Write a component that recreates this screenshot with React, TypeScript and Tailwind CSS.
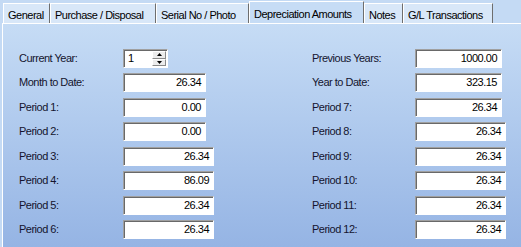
import { ReactNode } from 'react'

const tabs = [
  { label: 'General', w: 'w-[47px]' },
  { label: 'Purchase / Disposal', w: 'w-[106px]' },
  { label: 'Serial No / Photo', w: 'w-[93px]' },
  { label: 'Depreciation Amounts', w: 'w-[115px]', active: true },
  { label: 'Notes', w: 'w-[39px]' },
  { label: 'G/L Transactions', w: 'w-[90px]' },
]

const rows = [
  { left: 'Current Year:', lv: null, lw: '', right: 'Previous Years:', rv: '1000.00', rw: 'w-[87px]', mt: 'mt-[25px]' },
  { left: 'Month to Date:', lv: '26.34', lw: 'w-[83px]', right: 'Year to Date:', rv: '323.15', rw: 'w-[87px]', mt: 'mt-[5px]' },
  { left: 'Period 1:', lv: '0.00', lw: 'w-[83px]', right: 'Period 7:', rv: '26.34', rw: 'w-[87px]', mt: 'mt-[6px]' },
  { left: 'Period 2:', lv: '0.00', lw: 'w-[83px]', right: 'Period 8:', rv: '26.34', rw: 'w-[91px]', mt: 'mt-[5px]' },
  { left: 'Period 3:', lv: '26.34', lw: 'w-[91px]', right: 'Period 9:', rv: '26.34', rw: 'w-[91px]', mt: 'mt-[6px]' },
  { left: 'Period 4:', lv: '86.09', lw: 'w-[91px]', right: 'Period 10:', rv: '26.34', rw: 'w-[91px]', mt: 'mt-[5px]' },
  { left: 'Period 5:', lv: '26.34', lw: 'w-[91px]', right: 'Period 11:', rv: '26.34', rw: 'w-[91px]', mt: 'mt-[6px]' },
  { left: 'Period 6:', lv: '26.34', lw: 'w-[91px]', right: 'Period 12:', rv: '26.34', rw: 'w-[91px]', mt: 'mt-[5px]' },
]

function Box({ children, className }: { children?: ReactNode; className?: string }) {
  return (
    <div
      className={`flex h-[19px] items-center border-t border-l border-[#a0a0a0] border-r border-b border-r-white border-b-white bg-white shadow-[inset_1px_1px_0_#696969] ${className ?? ''}`}
    >
      {children}
    </div>
  )
}

function Spinner() {
  return (
    <Box className="w-[45px]">
      <span className="flex-1 pl-[4px] text-black">1</span>
      <div className="mr-[1px] flex h-[15px] w-[14px] flex-col">
        <div className="flex flex-1 items-center justify-center border border-t-white border-l-white border-r-[#8a8a8a] border-b-[#8a8a8a] bg-[#ececec]">
          <svg width="5" height="3" viewBox="0 0 5 3">
            <path d="M2.5 0 L5 3 L0 3 Z" fill="#000" />
          </svg>
        </div>
        <div className="flex flex-1 items-center justify-center border border-t-white border-l-white border-r-[#8a8a8a] border-b-[#8a8a8a] bg-[#ececec]">
          <svg width="5" height="3" viewBox="0 0 5 3">
            <path d="M0 0 L5 0 L2.5 3 Z" fill="#000" />
          </svg>
        </div>
      </div>
    </Box>
  )
}

export default function App() {
  return (
    <div className="flex h-[247px] w-[521px] flex-col overflow-hidden bg-[#c4daf4] font-['Liberation_Sans',Arial,sans-serif] text-[11px] tracking-[-0.5px] text-[#14142e]">
      <div className="flex h-[23px] items-end pl-[3px]">
        {tabs.map((t) =>
          t.active ? (
            <div
              key={t.label}
              className={`${t.w} -mb-[1px] flex h-[23px] items-start border-t border-l border-r border-t-white border-l-white border-r-[#6e6e6e] bg-[#c6dcf5] pt-[4px] pl-[4px] text-black`}
            >
              {t.label}
            </div>
          ) : (
            <div
              key={t.label}
              className={`${t.w} flex h-[20px] items-start border-t border-l border-r border-t-white border-l-white border-r-[#6e6e6e] bg-[#d8e7f8] pt-[3px] pl-[4px] text-black`}
            >
              {t.label}
            </div>
          ),
        )}
      </div>
      <div className="ml-[2px] flex-1 border-t border-l border-white bg-gradient-to-b from-[#c6dcf5] to-[#95b4e4]">
        {rows.map((r, i) => (
          <div key={r.left} className={`${r.mt} grid grid-cols-[104px_91px_98px_103px_91px] items-center pl-[16px]`}>
            <span>{r.left}</span>
            {i === 0 ? (
              <Spinner />
            ) : (
              <Box className={`${r.lw} justify-end pr-[4px] text-black`}>{r.lv}</Box>
            )}
            <span />
            <span>{r.right}</span>
            <Box className={`${r.rw} justify-end pr-[4px] text-black`}>{r.rv}</Box>
          </div>
        ))}
      </div>
    </div>
  )
}
